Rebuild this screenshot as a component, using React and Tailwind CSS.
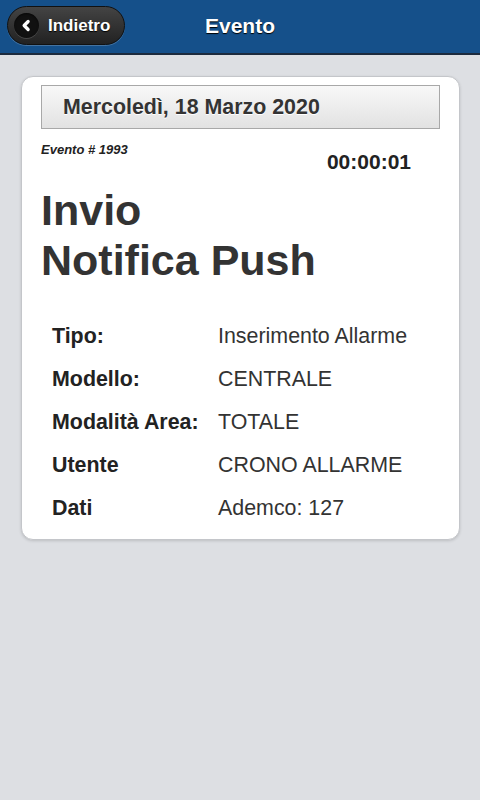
const rows = [
  { label: 'Tipo:', value: 'Inserimento Allarme' },
  { label: 'Modello:', value: 'CENTRALE' },
  { label: 'Modalità Area:', value: 'TOTALE' },
  { label: 'Utente', value: 'CRONO ALLARME' },
  { label: 'Dati', value: 'Ademco: 127' },
]

function BackIcon() {
  return (
    <span className="flex items-center justify-center w-[25px] h-[25px] rounded-full bg-[#111] shadow-[inset_0_1px_2px_rgba(0,0,0,0.6),0_1px_0_rgba(255,255,255,0.15)]">
      <svg width="13" height="13" viewBox="0 0 12 12" fill="none" stroke="#fff" strokeWidth="3" strokeLinecap="round" strokeLinejoin="round">
        <path d="M7.5 2.3 L3.8 6 L7.5 9.7" />
      </svg>
    </span>
  )
}

export default function App() {
  return (
    <div className="min-h-[800px] bg-[#dddfe3] font-['Liberation_Sans',Arial,sans-serif] text-[#333]">
      {/* Header */}
      <div className="grid grid-cols-[1fr_auto_1fr] items-center h-[55px] bg-[#15508a] border-b-2 border-[#1c2b3e] px-[7px] pb-[2px]">
        <div>
          <button className="flex items-center gap-[9px] h-[39px] w-[118px] pl-[6px] rounded-full border border-[#111] bg-gradient-to-b from-[#444] to-[#222] shadow-[0_1px_0_rgba(255,255,255,0.2)]">
            <BackIcon />
            <span className="text-[17px] font-bold text-white [text-shadow:0_1px_1px_#000]">Indietro</span>
          </button>
        </div>
        <div className="text-[21px] font-bold text-white [text-shadow:0_1px_1px_#000]">Evento</div>
        <div />
      </div>

      {/* Content */}
      <div className="px-[21px] pt-[21px]">
        <div className="w-[439px] bg-white rounded-[12px] border border-[#c4c6ca] shadow-[0_1px_3px_rgba(0,0,0,0.15)] px-[19px] pt-[8px] pb-[9px]">
          <div className="flex items-center h-[44px] pl-[21px] border border-[#a8a8a8] bg-gradient-to-b from-[#f8f8f8] to-[#e2e2e2]">
            <span className="text-[21.4px] font-bold text-[#333] [text-shadow:0_1px_0_#fff]">Mercoledì, 18 Marzo 2020</span>
          </div>

          <div className="flex justify-between items-start mt-[13px]">
            <span className="text-[13px] leading-[16px] font-bold italic text-[#222]">Evento # 1993</span>
            <span className="mt-[8px] mr-[29px] text-[21px] leading-[24px] font-bold text-[#222]">00:00:01</span>
          </div>

          <h1 className="mt-[11px] text-[43px] leading-[50px] font-bold text-[#333]">
            Invio
            <br />
            Notifica Push
          </h1>

          <div className="mt-[30px] pl-[11px]">
            {rows.map((r) => (
              <div key={r.label} className="grid grid-cols-[166px_1fr] items-center h-[43px] text-[21.4px]">
                <span className="font-bold text-[#222]">{r.label}</span>
                <span className="text-[#333]">{r.value}</span>
              </div>
            ))}
          </div>
        </div>
      </div>
    </div>
  )
}
